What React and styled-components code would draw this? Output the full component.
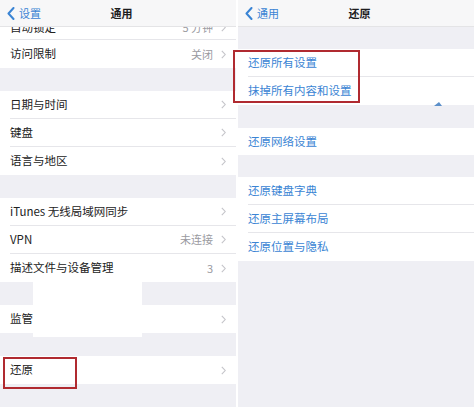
import React from "react";
import styled, { createGlobalStyle } from "styled-components";

const GlobalStyle = createGlobalStyle`
    html, body {
        margin: 0;
        padding: 0;
        background: #ffffff;
        font-family: "Noto Sans CJK SC", "Noto Sans", sans-serif;
    }
`;

const Screen = styled.div`
    position: relative;
    display: flex;
    gap: 2px;
    width: 474px;
    height: 413px;
    background: #ffffff;
    overflow: hidden;
`;

const Panel = styled.div`
    display: flex;
    flex-direction: column;
    width: 236px;
    height: 407px;
    background: #efeff4;
    overflow: hidden;
`;

const NavBar = styled.div`
    position: relative;
    z-index: 1;
    display: grid;
    grid-template-columns: 1fr auto 1fr;
    align-items: center;
    flex-shrink: 0;
    height: 27px;
    padding-left: 7px;
    background: #f7f7f8;
    border-bottom: 1px solid #e4e4e6;
    box-sizing: border-box;
`;

const Back = styled.div`
    display: flex;
    align-items: center;
    gap: 4px;
    color: #3a84d4;
    font-size: 11px;
    line-height: 1;
`;

const NavTitle = styled.div`
    font-size: 11px;
    line-height: 1;
    font-weight: 700;
    color: #1d1d1f;
`;

const Gap = styled.div`
    flex-shrink: 0;
    height: ${({ $h }) => $h}px;
`;

// $shift: list scrolled up so its first row sits half under the nav bar
const Group = styled.div`
    display: flex;
    flex-direction: column;
    flex-shrink: 0;
    background: #ffffff;
    margin-top: ${({ $shift }) => ($shift ? -$shift : 0)}px;
`;

const Row = styled.div`
    display: flex;
    align-items: center;
    height: ${({ $h }) => $h || 28}px;
    padding-left: 10px;
    box-sizing: border-box;
`;

const RowInner = styled.div`
    flex: 1;
    display: flex;
    align-items: center;
    height: 100%;
    padding-right: 10px;
    border-bottom: ${({ $last }) => ($last ? "none" : "1px solid #e6e6ea")};
    box-sizing: border-box;
`;

const Label = styled.div`
    flex: 1;
    font-size: 11.5px;
    line-height: 1;
    color: ${({ $blue }) => ($blue ? "#3a84d4" : "#222222")};
    white-space: nowrap;
`;

const Value = styled.div`
    font-size: 11px;
    line-height: 1;
    color: #9a9a9f;
    margin-right: 8px;
`;

const Highlight = styled.div`
    position: absolute;
    border: 2px solid #b02a30;
    box-sizing: border-box;
`;

const Redact = styled.div`
    position: absolute;
    background: #ffffff;
`;

const Cursor = styled.svg`
    position: absolute;
    left: 433px;
    top: 101px;
`;

const BackIcon = () => (
    <svg width="8" height="13" viewBox="0 0 8 13">
        <path d="M6.5 1 L1.5 6.5 L6.5 12" fill="none" stroke="#3a84d4" strokeWidth="2" strokeLinecap="round" strokeLinejoin="round" />
    </svg>
);

const Chevron = () => (
    <svg width="5" height="9" viewBox="0 0 5 9">
        <path d="M0.8 0.8 L4.2 4.5 L0.8 8.2" fill="none" stroke="#c4c4c9" strokeWidth="1.1" />
    </svg>
);

const Item = ({ label, value, last, blue, arrow = true, h }) => (
    <Row $h={h}>
        <RowInner $last={last}>
            <Label $blue={blue}>{label}</Label>
            {value && <Value>{value}</Value>}
            {arrow && <Chevron />}
        </RowInner>
    </Row>
);

const Nav = ({ back, title }) => (
    <NavBar>
        <Back>
            <BackIcon />
            {back}
        </Back>
        <NavTitle>{title}</NavTitle>
        <span />
    </NavBar>
);

const App = () => {
    return (
        <>
            <GlobalStyle />
            <Screen>
                <Panel>
                    <Nav back="设置" title="通用" />
                    <Group $shift={11}>
                        <Item label="自动锁定" value="5 分钟" h={24} />
                        <Item label="访问限制" value="关闭" last />
                    </Group>
                    <Gap $h={23} />
                    <Group>
                        <Item label="日期与时间" />
                        <Item label="键盘" />
                        <Item label="语言与地区" last />
                    </Group>
                    <Gap $h={23} />
                    <Group>
                        <Item label="iTunes 无线局域网同步" />
                        <Item label="VPN" value="未连接" />
                        <Item label="描述文件与设备管理" value="3" last />
                    </Group>
                    <Gap $h={23} />
                    <Group>
                        <Item label="监管" last />
                    </Group>
                    <Gap $h={23} />
                    <Group>
                        <Item label="还原" last />
                    </Group>
                </Panel>
                <Panel>
                    <Nav back="通用" title="还原" />
                    <Gap $h={22} />
                    <Group>
                        <Item label="还原所有设置" blue arrow={false} />
                        <Item label="抹掉所有内容和设置" blue arrow={false} last />
                    </Group>
                    <Gap $h={23} />
                    <Group>
                        <Item label="还原网络设置" blue arrow={false} h={27} last />
                    </Group>
                    <Gap $h={22} />
                    <Group>
                        <Item label="还原键盘字典" blue arrow={false} />
                        <Item label="还原主屏幕布局" blue arrow={false} />
                        <Item label="还原位置与隐私" blue arrow={false} last />
                    </Group>
                </Panel>
                <Redact style={{ left: 33, top: 281, width: 109, height: 56 }} />
                <Highlight style={{ left: 3, top: 357, width: 74, height: 32 }} />
                <Highlight style={{ left: 233, top: 50, width: 127, height: 53 }} />
                <Cursor width="10" height="6" viewBox="0 0 10 6">
                    <path d="M1 5 L6 1 L9 5 Z" fill="#5b8fc9" />
                </Cursor>
            </Screen>
        </>
    );
};

export default App;
